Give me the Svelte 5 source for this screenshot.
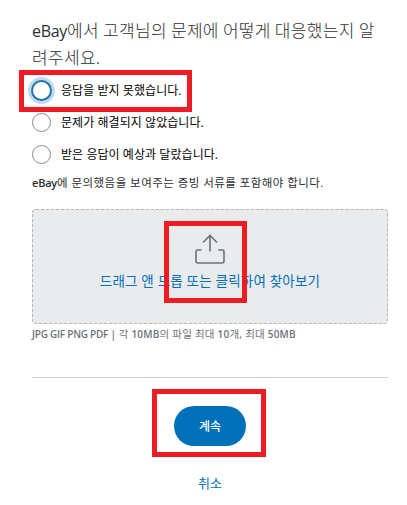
<script lang="ts">
	const options = ['응답을 받지 못했습니다.', '문제가 해결되지 않았습니다.', '받은 응답이 예상과 달랐습니다.'];

	let focused = 0;
</script>

<main>
	<h1><span class="brand">eBay</span>에서 고객님의 문제에 어떻게 대응했는지 알<br />려주세요.</h1>

	<div class="options" role="radiogroup">
		{#each options as option, i}
			<label class="option" class:focused={focused === i}>
				<input type="radio" name="response" on:focus={() => (focused = i)} />
				<span class="text">{option}</span>
				{#if i === 0}
					<span class="mark mark-option"></span>
				{/if}
			</label>
		{/each}
	</div>

	<p class="note"><b>eBay</b>에 문의했음을 보여주는 증빙 서류를 포함해야 합니다.</p>

	<div class="dropzone">
		<svg width="32" height="32" viewBox="0 0 32 32" fill="none">
			<path d="M16 18V3M9.500 9L16 2.500L22.500 9" />
			<path d="M7 17H3.500Q2 17 2 18.500V28Q2 30 4 30H28Q30 30 30 28V18.500Q30 17 28.500 17H25" />
		</svg>
		<span class="browse">드래그 앤 드롭 또는 클릭하여 찾아보기</span>
		<span class="mark mark-upload"></span>
	</div>
	<p class="hint"><span class="formats">JPG GIF PNG PDF |</span> 각 <b>10MB</b>의 파일 최대 <b>10</b>개, 최대 <b>50MB</b></p>

	<hr />

	<div class="actions">
		<div class="submit">
			<button class="primary">계속</button>
			<span class="mark mark-submit"></span>
		</div>
		<button class="cancel">취소</button>
	</div>
</main>

<style>
	:global(body) {
		margin: 0;
		background: #fff;
	}

	main {
		box-sizing: border-box;
		width: 407px;
		height: 505px;
		padding: 16px 19px 0 32px;
		overflow: hidden;
		font-family: 'Open Sans', 'Noto Sans CJK KR', sans-serif;
		color: #2c2e2f;
	}

	h1,
	p {
		margin: 0;
		font-weight: 400;
		white-space: nowrap;
	}

	h1 {
		height: 57px;
		font-family: 'Noto Sans CJK KR', sans-serif;
		font-size: 17px;
		line-height: 27px;
		font-weight: 300;
		letter-spacing: 0.32px;
	}

	.brand {
		font-family: 'Open Sans', sans-serif;
		font-weight: 500;
		font-size: 16px;
		line-height: 1;
		letter-spacing: -0.3px;
	}

	.options {
		display: flex;
		flex-direction: column;
		padding-top: 1px;
	}

	.option {
		position: relative;
		display: flex;
		align-items: center;
		gap: 10px;
		height: 32px;
		color: #000;
	}

	input {
		appearance: none;
		box-sizing: border-box;
		width: 19px;
		height: 19px;
		margin: 0;
		border: 1px solid #8a8e91;
		border-radius: 50%;
		background: #fff;
	}

	.focused input {
		width: 21px;
		height: 21px;
		margin: 0 -1px;
		border: 2px solid #2474aa;
		box-shadow: 0 0 0 3px #bedaee;
	}

	.text {
		font-size: 12px;
		letter-spacing: 0.06px;
	}

	.mark {
		position: absolute;
		box-sizing: border-box;
		border: 5px solid #ed1c24;
		pointer-events: none;
	}

	.mark-option {
		left: -13px;
		top: -4px;
		width: 173px;
		height: 42px;
	}

	.note {
		padding-top: 3px;
		font-size: 11.5px;
		line-height: 20px;
		letter-spacing: 0.45px;
	}

	.note b {
		font-size: 11px;
		font-weight: 600;
		letter-spacing: -0.2px;
	}

	.dropzone {
		position: relative;
		box-sizing: border-box;
		display: flex;
		flex-direction: column;
		align-items: center;
		width: 356px;
		height: 115px;
		margin-top: 16px;
		padding-top: 23px;
		border: 1px dashed #b1b5b8;
		border-radius: 4px;
		background: #eaebed;
	}

	svg {
		stroke: #6c7378;
		stroke-width: 1.6;
		stroke-linecap: round;
	}

	.browse {
		margin-top: 4px;
		font-size: 13.5px;
		line-height: 24px;
		letter-spacing: 0.2px;
		color: #0070ba;
		white-space: nowrap;
	}

	.mark-upload {
		left: 131px;
		top: 11px;
		width: 83px;
		height: 82px;
	}

	.hint {
		font-size: 10.5px;
		line-height: 20px;
		letter-spacing: 0.2px;
		color: #6c7378;
	}

	.hint b,
	.formats {
		font-size: 10px;
		font-weight: 600;
	}

	.formats {
		letter-spacing: -0.25px;
	}

	hr {
		width: 356px;
		height: 1px;
		margin: 33px 0 28px;
		border: 0;
		background: #cbd2d6;
	}

	.actions {
		display: flex;
		flex-direction: column;
		align-items: center;
		width: 356px;
	}

	.submit {
		position: relative;
	}

	button {
		display: block;
		padding: 0;
		border: 0;
		font-family: inherit;
	}

	.primary {
		width: 72px;
		height: 40px;
		border-radius: 20px;
		background: #0070ba;
		color: #fff;
		font-size: 12px;
		font-weight: 500;
	}

	.mark-submit {
		left: -22px;
		top: -17px;
		width: 114px;
		height: 68px;
	}

	.cancel {
		margin-top: 27px;
		background: none;
		color: #0070ba;
		font-size: 13px;
		line-height: 20px;
	}
</style>
